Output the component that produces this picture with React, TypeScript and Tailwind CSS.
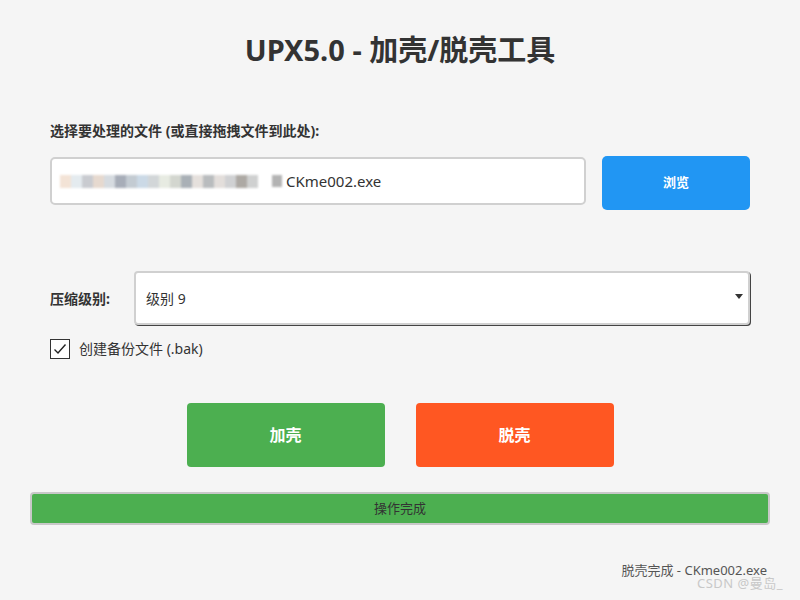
export default function App() {
  const blur = [
    "#f3e3d6", "#e4ebef", "#c9cbd0", "#e6d9cf", "#d6dbe0", "#a7adb8", "#c3cbd2", "#cbd9e6",
    "#d2d6d8", "#e7ebe2", "#d3d6cf", "#a9b0b6", "#e5e0dc", "#b9bcbe", "#e3dedb", "#d0d1d3",
    "#ada9a4", "#cfd0d0",
  ]
  return (
    <div
      className="relative w-[800px] h-[600px] bg-[#f5f5f5] text-[#333] overflow-hidden"
      style={{ fontFamily: '"Noto Sans", "Noto Sans CJK SC", sans-serif' }}
    >
      <div className="px-[50px] pt-[30px] flex flex-col">
        <h1 className="text-center text-[29px] leading-[40px] font-bold text-[#333]">
          UPX5.0 - 加壳/脱壳工具
        </h1>

        <label className="mt-[51px] text-[14px] leading-[20px] font-bold">
          选择要处理的文件 (或直接拖拽文件到此处):
        </label>
        <div className="mt-[15px] flex gap-[16px] items-start">
          <div className="w-[536px] h-[48px] mt-[1px] bg-white border-2 border-[#d0d0d0] rounded-[5px] flex items-center pl-[8px] text-[15px]">
            <div className="flex items-center blur-[1px]">
              {blur.map((c, i) => (
                <span key={i} className="w-[11px] h-[13px]" style={{ background: c }} />
              ))}
            </div>
            <span className="w-[14px]" />
            <span className="w-[10px] h-[12px] bg-[#b3b3b3] blur-[1px]" />
            <span className="ml-[4px] text-[#333]">CKme002.exe</span>
          </div>
          <button className="w-[148px] h-[54px] bg-[#2196f3] rounded-[5px] text-white text-[13px] font-bold">
            浏览
          </button>
        </div>

        <div className="mt-[61px] flex items-center">
          <label className="w-[84px] text-[14px] font-bold">压缩级别:</label>
          <div className="relative flex-1 h-[54px] bg-white border-2 border-[#d0d0d0] rounded-[4px] shadow-[1px_1px_0_#444] flex items-center pl-[10px] text-[14px]">
            级别 9
            <span className="absolute right-[5px] top-[21px] w-0 h-0 border-l-[4px] border-r-[4px] border-t-[5px] border-l-transparent border-r-transparent border-t-[#333]" />
          </div>
        </div>

        <div className="mt-[13px] flex items-center gap-[9px]">
          <span className="w-[20px] h-[20px] border border-[#333] bg-white flex items-center justify-center">
            <svg width="16" height="16" viewBox="0 0 16 16" fill="none">
              <path d="M2.5 8.5 L6 12 L13.5 3.5" stroke="#222" strokeWidth="1.4" />
            </svg>
          </span>
          <span className="text-[14px] text-[#333]">创建备份文件 (.bak)</span>
        </div>

        <div className="mt-[44px] flex justify-center gap-[31px]">
          <button className="w-[198px] h-[64px] bg-[#4caf50] rounded-[4px] text-white text-[16px] font-bold">
            加壳
          </button>
          <button className="w-[198px] h-[64px] bg-[#ff5722] rounded-[4px] text-white text-[16px] font-bold">
            脱壳
          </button>
        </div>
      </div>

      <div className="mx-[30px] mt-[25px] h-[33px] border-2 border-[#c8c8c8] rounded-[4px] bg-[#4caf50] flex items-center justify-center text-[13px] text-[#333]">
        操作完成
      </div>

      <div className="mt-[36px] pr-[33px] text-right text-[13px] text-[#555]">
        脱壳完成 - CKme002.exe
      </div>

      <div className="absolute left-[697px] top-[574px] text-[13px] text-[#c8c8c8] tracking-[0.5px]">
        CSDN @曼岛_
      </div>
    </div>
  )
}
